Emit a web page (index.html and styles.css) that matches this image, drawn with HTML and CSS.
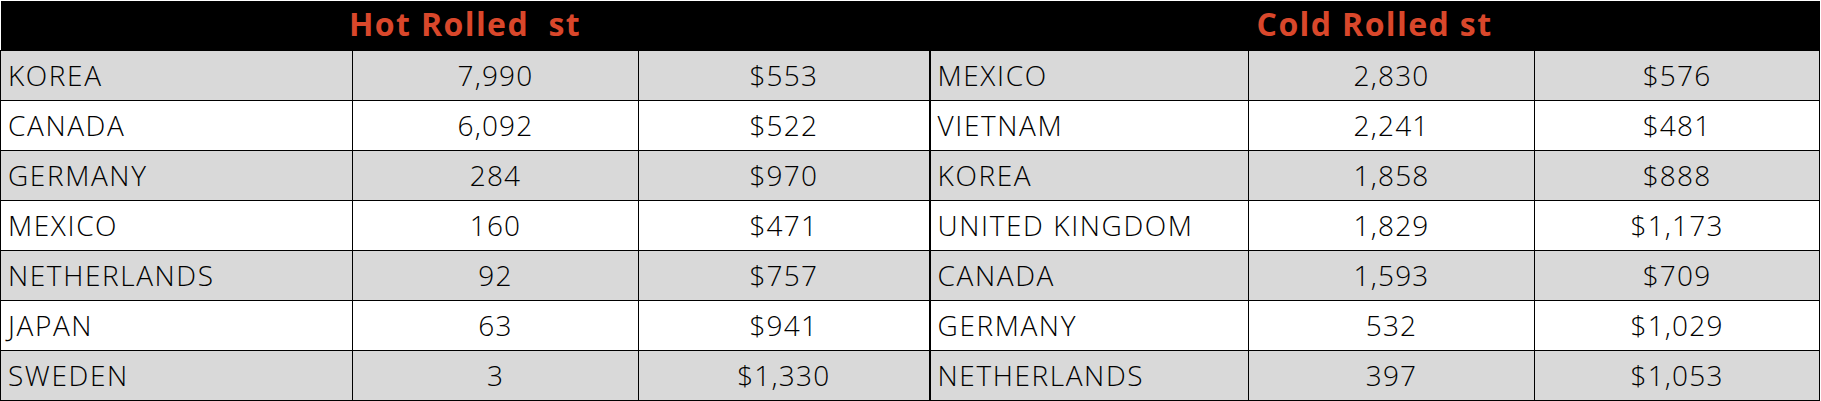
FILE: index.html
```html
<!DOCTYPE html>
<html>
<head>
<meta charset="utf-8">
<link rel="stylesheet" href="styles.css">
</head>
<body>
<table class="imports">
  <colgroup>
    <col class="c-country-l"><col class="c-qty-l"><col class="c-price-l">
    <col class="c-country-r"><col class="c-qty-r"><col class="c-price-r">
  </colgroup>
  <thead>
    <tr class="head">
      <th colspan="3" class="title">Hot Rolled&nbsp;&nbsp;st</th>
      <th colspan="3" class="title">Cold Rolled st</th>
    </tr>
  </thead>
  <tbody>
    <tr class="shade"><td class="name">KOREA</td><td class="num">7,990</td><td class="num split">$553</td><td class="name">MEXICO</td><td class="num">2,830</td><td class="num">$576</td></tr>
    <tr><td class="name">CANADA</td><td class="num">6,092</td><td class="num split">$522</td><td class="name">VIETNAM</td><td class="num">2,241</td><td class="num">$481</td></tr>
    <tr class="shade"><td class="name">GERMANY</td><td class="num">284</td><td class="num split">$970</td><td class="name">KOREA</td><td class="num">1,858</td><td class="num">$888</td></tr>
    <tr><td class="name">MEXICO</td><td class="num">160</td><td class="num split">$471</td><td class="name">UNITED KINGDOM</td><td class="num">1,829</td><td class="num">$1,173</td></tr>
    <tr class="shade"><td class="name">NETHERLANDS</td><td class="num">92</td><td class="num split">$757</td><td class="name">CANADA</td><td class="num">1,593</td><td class="num">$709</td></tr>
    <tr><td class="name">JAPAN</td><td class="num">63</td><td class="num split">$941</td><td class="name">GERMANY</td><td class="num">532</td><td class="num">$1,029</td></tr>
    <tr class="shade last"><td class="name">SWEDEN</td><td class="num">3</td><td class="num split">$1,330</td><td class="name">NETHERLANDS</td><td class="num">397</td><td class="num">$1,053</td></tr>
  </tbody>
</table>
</body>
</html>
```
FILE: styles.css
```css
html, body {
  margin: 0;
  padding: 0;
  background: #ffffff;
}
body {
  padding-top: 1px;
  font-family: "Open Sans", "Liberation Sans", sans-serif;
}
.imports {
  border-collapse: collapse;
  table-layout: fixed;
  width: 1819px;
}
.c-country-l { width: 352px; }
.c-qty-l { width: 286px; }
.c-price-l { width: 291px; }
.c-country-r { width: 319px; }
.c-qty-r { width: 286px; }
.c-price-r { width: 285px; }

.head th {
  background: #000000;
  height: 49px;
  padding: 0;
  border: none;
  color: #d9472b;
  font-weight: 700;
  font-size: 32px;
  letter-spacing: 1.4px;
  text-align: center;
  vertical-align: top;
  line-height: 46px;
}
tbody td {
  height: 49px;
  padding: 0;
  border: 1px solid #000000;
  font-size: 28px;
  font-weight: 300;
  color: #000000;
  letter-spacing: 1.2px;
  line-height: 49px;
  white-space: nowrap;
  overflow: hidden;
}
td.name {
  padding-left: 7px;
  text-align: left;
  letter-spacing: 1.6px;
}
tbody tr.shade td {
  background: #d9d9d9;
}
tbody tr.last td {
  border-bottom: 2px solid #000000;
}
td.num {
  text-align: center;
}
td.split {
  border-right: 2px solid #000000;
}
tbody td:first-child {
  border-left: 1px solid #000000;
}
```
